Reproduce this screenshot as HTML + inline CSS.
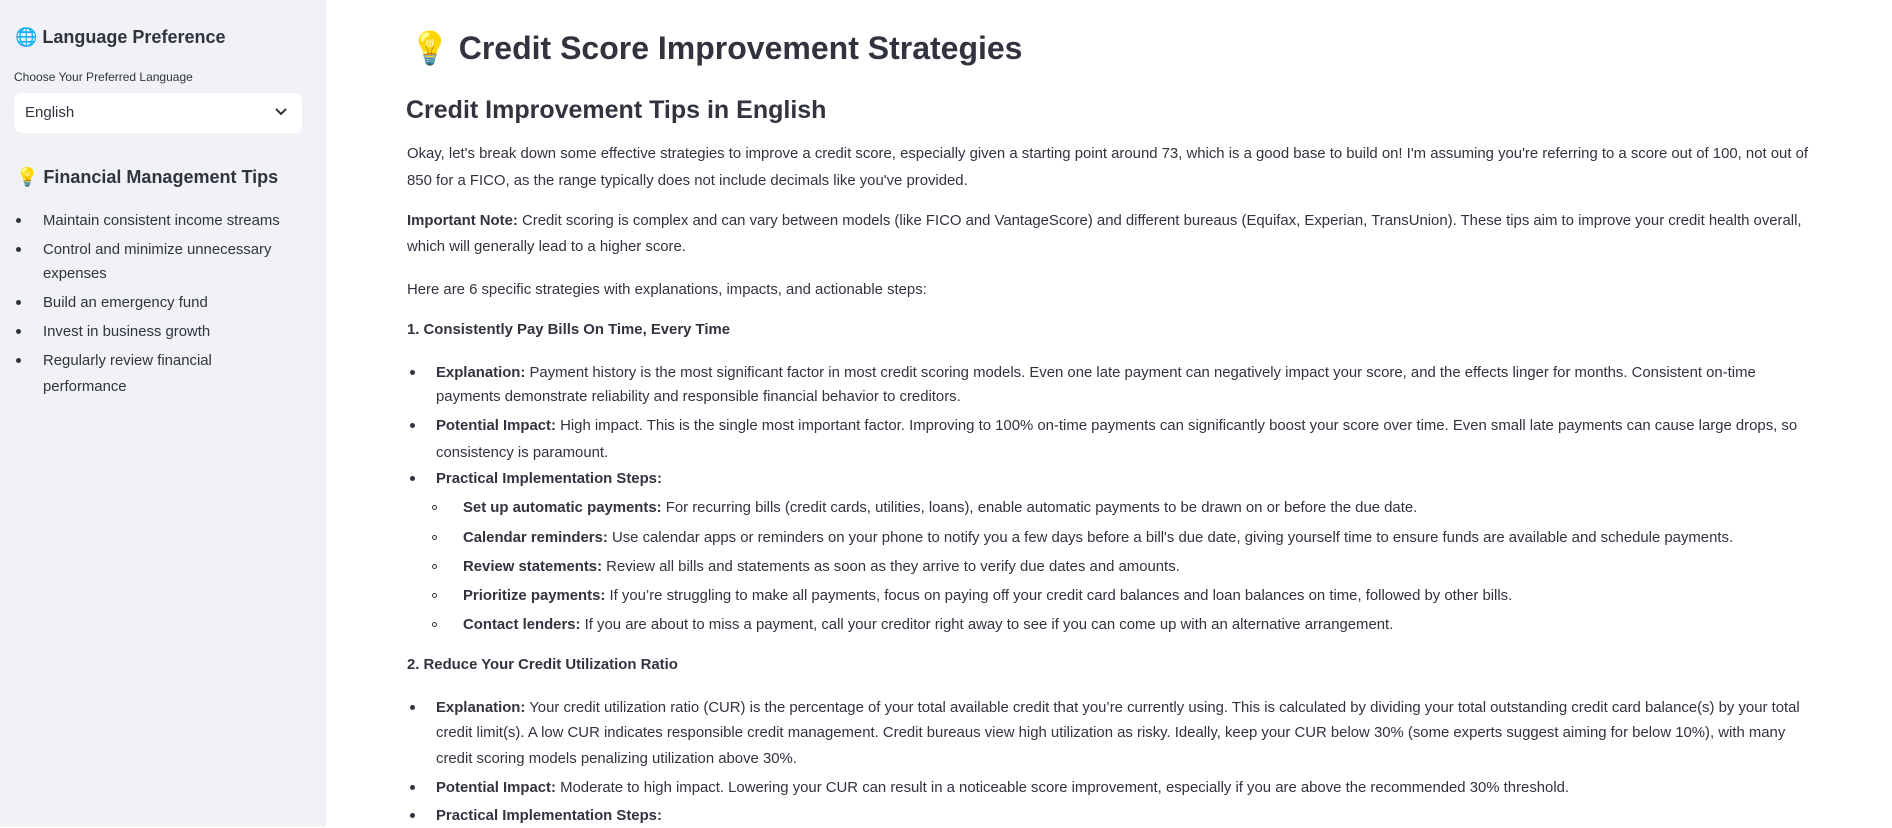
<!DOCTYPE html>
<html><head><meta charset="utf-8"><style>
body{margin:0;width:1892px;height:827px;overflow:hidden;background:#fff;font-family:"Liberation Sans",sans-serif;color:#31333f;position:relative}
.sb{position:absolute;left:0;top:0;width:326px;height:827px;background:#f0f2f6}
.l{position:absolute;white-space:nowrap;line-height:24px;font-size:14.9px}
b{font-weight:bold}
.dot{position:absolute;width:5px;height:5px;border-radius:50%;background:#31333f}
.circ{position:absolute;width:5px;height:5px;border-radius:50%;border:1px solid #31333f;box-sizing:border-box}
</style></head><body>
<div class="sb"></div>
<div class="l" style="left:15px;top:24px;font-size:18px;font-weight:bold;line-height:26px">🌐 Language Preference</div>
<div class="l" style="left:14px;top:67px;font-size:12px;line-height:20px">Choose Your Preferred Language</div>
<div style="position:absolute;left:14px;top:93px;width:288px;height:40px;background:#fff;border-radius:8px"></div>
<div class="l" style="left:25px;top:101px;font-size:15px">English</div>
<svg style="position:absolute;left:275px;top:107px" width="12" height="10"><path d="M1 2 L6 7 L11 2" stroke="#31333f" stroke-width="2" fill="none"/></svg>
<div class="l" style="left:16px;top:164px;font-size:18px;font-weight:bold;line-height:26px">💡 Financial Management Tips</div>
<div class="dot" style="left:16px;top:218px"></div><div class="l" style="left:43px;top:209px">Maintain consistent income streams</div>
<div class="dot" style="left:16px;top:247px"></div><div class="l" style="left:43px;top:238px">Control and minimize unnecessary</div>
<div class="l" style="left:43px;top:262px">expenses</div>
<div class="dot" style="left:16px;top:300px"></div><div class="l" style="left:43px;top:291px">Build an emergency fund</div>
<div class="dot" style="left:16px;top:329px"></div><div class="l" style="left:43px;top:320px">Invest in business growth</div>
<div class="dot" style="left:16px;top:358px"></div><div class="l" style="left:43px;top:349px">Regularly review financial</div>
<div class="l" style="left:43px;top:375px">performance</div>

<div class="l" style="left:410px;top:24px;font-size:32px;font-weight:bold;line-height:48px">💡 Credit Score Improvement Strategies</div>
<div class="l" style="left:406px;top:93px;font-size:25px;font-weight:bold;line-height:34px">Credit Improvement Tips in English</div>
<div class="l" style="left:407px;top:142px">Okay, let's break down some effective strategies to improve a credit score, especially given a starting point around 73, which is a good base to build on! I'm assuming you're referring to a score out of 100, not out of</div>
<div class="l" style="left:407px;top:169px">850 for a FICO, as the range typically does not include decimals like you've provided.</div>
<div class="l" style="left:407px;top:209px"><b>Important Note:</b> Credit scoring is complex and can vary between models (like FICO and VantageScore) and different bureaus (Equifax, Experian, TransUnion). These tips aim to improve your credit health overall,</div>
<div class="l" style="left:407px;top:235px">which will generally lead to a higher score.</div>
<div class="l" style="left:407px;top:278px">Here are 6 specific strategies with explanations, impacts, and actionable steps:</div>
<div class="l" style="left:407px;top:318px"><b>1. Consistently Pay Bills On Time, Every Time</b></div>
<div class="dot" style="left:410px;top:370px"></div><div class="l" style="left:436px;top:361px"><b>Explanation:</b> Payment history is the most significant factor in most credit scoring models. Even one late payment can negatively impact your score, and the effects linger for months. Consistent on-time</div>
<div class="l" style="left:436px;top:385px">payments demonstrate reliability and responsible financial behavior to creditors.</div>
<div class="dot" style="left:410px;top:423px"></div><div class="l" style="left:436px;top:414px"><b>Potential Impact:</b> High impact. This is the single most important factor. Improving to 100% on-time payments can significantly boost your score over time. Even small late payments can cause large drops, so</div>
<div class="l" style="left:436px;top:441px">consistency is paramount.</div>
<div class="dot" style="left:410px;top:476px"></div><div class="l" style="left:436px;top:467px"><b>Practical Implementation Steps:</b></div>
<div class="circ" style="left:432px;top:505px"></div><div class="l" style="left:463px;top:496px"><b>Set up automatic payments:</b> For recurring bills (credit cards, utilities, loans), enable automatic payments to be drawn on or before the due date.</div>
<div class="circ" style="left:432px;top:535px"></div><div class="l" style="left:463px;top:526px"><b>Calendar reminders:</b> Use calendar apps or reminders on your phone to notify you a few days before a bill's due date, giving yourself time to ensure funds are available and schedule payments.</div>
<div class="circ" style="left:432px;top:564px"></div><div class="l" style="left:463px;top:555px"><b>Review statements:</b> Review all bills and statements as soon as they arrive to verify due dates and amounts.</div>
<div class="circ" style="left:432px;top:593px"></div><div class="l" style="left:463px;top:584px"><b>Prioritize payments:</b> If you’re struggling to make all payments, focus on paying off your credit card balances and loan balances on time, followed by other bills.</div>
<div class="circ" style="left:432px;top:622px"></div><div class="l" style="left:463px;top:613px"><b>Contact lenders:</b> If you are about to miss a payment, call your creditor right away to see if you can come up with an alternative arrangement.</div>
<div class="l" style="left:407px;top:653px"><b>2. Reduce Your Credit Utilization Ratio</b></div>
<div class="dot" style="left:410px;top:705px"></div><div class="l" style="left:436px;top:696px"><b>Explanation:</b> Your credit utilization ratio (CUR) is the percentage of your total available credit that you’re currently using. This is calculated by dividing your total outstanding credit card balance(s) by your total</div>
<div class="l" style="left:436px;top:721px">credit limit(s). A low CUR indicates responsible credit management. Credit bureaus view high utilization as risky. Ideally, keep your CUR below 30% (some experts suggest aiming for below 10%), with many</div>
<div class="l" style="left:436px;top:747px">credit scoring models penalizing utilization above 30%.</div>
<div class="dot" style="left:410px;top:785px"></div><div class="l" style="left:436px;top:776px"><b>Potential Impact:</b> Moderate to high impact. Lowering your CUR can result in a noticeable score improvement, especially if you are above the recommended 30% threshold.</div>
<div class="dot" style="left:410px;top:813px"></div><div class="l" style="left:436px;top:804px"><b>Practical Implementation Steps:</b></div>
</body></html>
